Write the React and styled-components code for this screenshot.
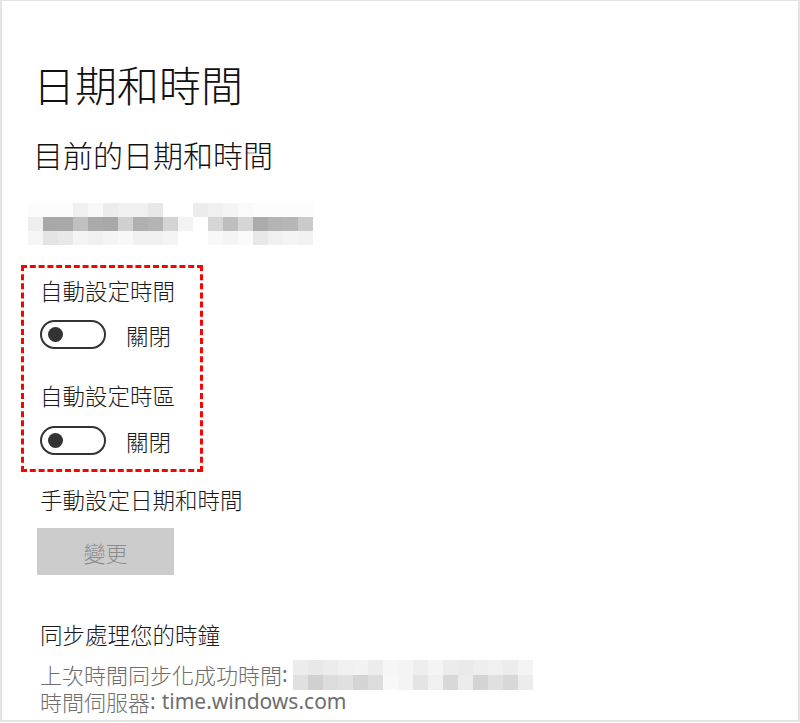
import React from "react";
import styled, { createGlobalStyle } from "styled-components";

const Global = createGlobalStyle`
  html, body { margin: 0; padding: 0; background: #ffffff; }
  body { font-family: "Noto Sans CJK TC", "Noto Sans", sans-serif; color: #000; }
  * { box-sizing: border-box; }
`;

const Frame = styled.div`
  width: 800px;
  height: 722px;
  border-top: 1px solid #e4e4e4;
  border-left: 2px solid #e4e4e4;
  border-right: 2px solid #e4e4e4;
  border-bottom: 2px solid #e4e4e4;
  overflow: hidden;
  padding: 62px 0 0 31px;
  display: flex;
  flex-direction: column;
  align-items: flex-start;
`;

const Title = styled.h1`
  margin: 0;
  font-size: 42px;
  line-height: 42px;
  font-weight: 300;
  color: #111;
`;

const Subtitle = styled.h2`
  margin: 34px 0 0 0;
  font-size: 30px;
  line-height: 30px;
  font-weight: 300;
  color: #111;
`;

const Mosaic = styled.div`
  display: grid;
  grid-template-columns: repeat(${(p) => p.$cols}, 15px);
  grid-auto-rows: ${(p) => p.$row}px;
  margin: ${(p) => p.$margin};
`;

const Cell = styled.div`
  background: ${(p) => p.$c};
`;

const Highlight = styled.div`
  margin: 20px 0 0 -12px;
  width: 182px;
  height: 207px;
  border: 3px dashed #ff0000;
  padding: 10px 0 0 16px;
  display: flex;
  flex-direction: column;
  align-items: flex-start;
`;

const Label = styled.div`
  font-size: 22.5px;
  line-height: 24px;
  font-weight: 300;
  color: #1a1a1a;
  margin: ${(p) => p.$m || "0"};
`;

const ToggleRow = styled.div`
  display: flex;
  align-items: center;
  gap: 20px;
  margin: ${(p) => p.$m || "0"};
`;

const Switch = styled.div`
  width: 66px;
  height: 29px;
  border: 2.5px solid #333;
  border-radius: 15px;
  display: flex;
  align-items: center;
  padding-left: 6px;
`;

const Knob = styled.div`
  width: 15px;
  height: 15px;
  border-radius: 50%;
  background: #333;
`;

const Button = styled.div`
  margin: 17px 0 0 4px;
  width: 137px;
  height: 47px;
  background: #cccccc;
  display: flex;
  align-items: center;
  justify-content: center;
  font-size: 22px;
  font-weight: 300;
  color: #8c8c8c;
`;

const InfoLine = styled.div`
  display: flex;
  align-items: center;
  font-size: 22px;
  line-height: 27px;
  height: 27px;
  font-weight: 300;
  color: #6e6e6e;
  margin: ${(p) => p.$m || "0 0 0 5px"};
`;

const Latin = styled.span`
  font-family: "Noto Sans", "Open Sans", sans-serif;
  font-weight: 400;
  font-size: 21px;
  margin-left: ${(p) => p.$gap || "0"};
`;

const dateRows = [
  ["#fcfcfc","#fcfcfc","#fcfcfc","#f0f0f0","#f8f8f8","#ececec","#f0f0f0","#f0f0f0","#e8e8e8","#ffffff","#ffffff","#ececec","#f0f0f0","#f4f4f4","#fafafa","#fcfcfc","#fcfcfc","#fcfcfc","#fcfcfc"],
  ["#eeeeee","#a8a8a8","#a8a8a8","#c0c0c0","#aaaaaa","#a8a8a8","#d0d0d0","#b0b0b0","#b4b4b4","#d4d4d4","#f3f3f3","#ffffff","#d6d6d6","#bebebe","#d6d6d6","#ababab","#b4b4b4","#b6b6b6","#cacaca"],
  ["#f6f6f6","#e4e4e4","#e8e8e8","#f4f4f4","#f0f0f0","#f4f4f4","#f8f8f8","#f0f0f0","#f0f0f0","#f4f4f4","#ffffff","#ffffff","#f8f8f8","#f4f4f4","#fafafa","#e8e8e8","#f0f0f0","#f4f4f4","#f2f2f2"],
];

const syncRows = [
  ["#ececec","#e8e8e8","#ececec","#f0f0f0","#f2f2f2","#ececec","#f6f6f6","#f4f4f4","#eeeeee","#f4f4f4","#ececec","#eaeaea","#eeeeee","#f0f0f0","#ececec","#f4f4f4"],
  ["#e0e0e0","#d0d0d0","#dcdcdc","#e0e0e0","#d4d4d4","#dcdcdc","#f8f8f8","#f4f4f4","#e4e4e4","#f0f0f0","#d8d8d8","#ececec","#d4d4d4","#e0e0e0","#d8d8d8","#ececec"],
];

function Pixels({ rows, row, margin }) {
  return (
    <Mosaic $cols={rows[0].length} $row={row} $margin={margin}>
      {rows.flatMap((r, i) => r.map((c, j) => <Cell key={i + "-" + j} $c={c} />))}
    </Mosaic>
  );
}

function Toggle({ m }) {
  return (
    <ToggleRow $m={m}>
      <Switch>
        <Knob />
      </Switch>
      <Label>關閉</Label>
    </ToggleRow>
  );
}

export default function App() {
  return (
    <>
      <Global />
      <Frame>
        <Title>日期和時間</Title>
        <Subtitle>目前的日期和時間</Subtitle>
        <Pixels rows={dateRows} row={14} margin="34px 0 0 -5px" />
        <Highlight>
          <Label>自動設定時間</Label>
          <Toggle m="18px 0 0 0" />
          <Label $m="34px 0 0 0">自動設定時區</Label>
          <Toggle m="19px 0 0 0" />
        </Highlight>
        <Label $m="15px 0 0 7px">手動設定日期和時間</Label>
        <Button>變更</Button>
        <Label $m="47px 0 0 7px">同步處理您的時鐘</Label>
        <InfoLine $m="15px 0 0 7px">
          上次時間同步化成功時間<Latin>:</Latin>
          <Pixels rows={syncRows} row={15} margin="0 0 0 5px" />
        </InfoLine>
        <InfoLine $m="0 0 0 7px">
          時間伺服器<Latin>:</Latin>
          <Latin $gap="6px">time.windows.com</Latin>
        </InfoLine>
      </Frame>
    </>
  );
}
